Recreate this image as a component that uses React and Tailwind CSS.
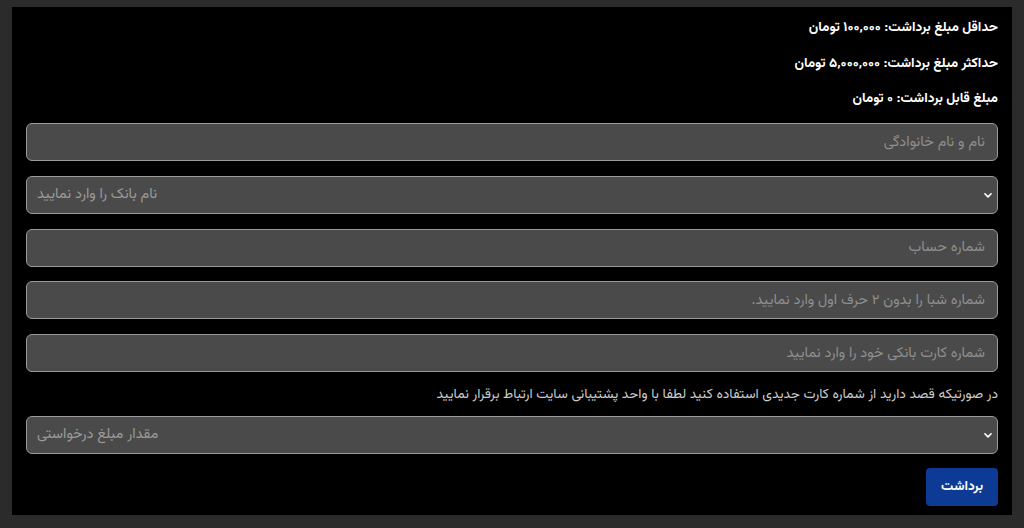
import React from "react";

const fieldBase =
  "w-full h-[38px] rounded-[6px] border border-[#9a9a9a] bg-[#4a4a4a] text-[14.5px] placeholder:text-[#8f8f8f] outline-none";

const Chevron = () => (
  <svg
    viewBox="0 0 16 16"
    className="pointer-events-none absolute right-[5px] top-1/2 h-[10px] w-[10px] -translate-y-1/2 text-white"
    fill="none"
    stroke="currentColor"
    strokeWidth="2.6"
    strokeLinecap="round"
    strokeLinejoin="round"
  >
    <path d="M3 6l5 5 5-5" />
  </svg>
);

const SelectField = ({ label }) => (
  <div className="relative" dir="ltr">
    <select
      defaultValue=""
      className={`${fieldBase} appearance-none pl-[10px] pr-8 text-left text-[#9a9a9a]`}
    >
      <option value="" disabled>
        {label}
      </option>
    </select>
    <Chevron />
  </div>
);

const TextField = ({ placeholder }) => (
  <input
    type="text"
    placeholder={placeholder}
    className={`${fieldBase} px-[12px] text-right text-[#e5e5e5]`}
  />
);

export default function App() {
  return (
    <div
      className="h-[528px] bg-[#2b2b2b] pt-[7px] pr-[12px] pb-[13px] pl-[12px]"
      style={{ fontFamily: '"Vazirmatn", "Noto Sans Arabic", "DejaVu Sans", sans-serif' }}
    >
      <div dir="rtl" className="flex h-full flex-col bg-black px-[14px] pt-[11px]">
        {/* Limits */}
        <div className="flex flex-col gap-[15.5px] text-[13.6px] font-bold leading-[20px] text-white">
          <p>حداقل مبلغ برداشت: ۱۰۰,۰۰۰ تومان</p>
          <p>حداکثر مبلغ برداشت: ۵,۰۰۰,۰۰۰ تومان</p>
          <p>مبلغ قابل برداشت: ۰ تومان</p>
        </div>

        {/* Form */}
        <div className="mt-[14px] flex flex-col gap-[14.75px]">
          <TextField placeholder="نام و نام خانوادگی" />
          <SelectField label="نام بانک را وارد نمایید" />
          <TextField placeholder="شماره حساب" />
          <TextField placeholder="شماره شبا را بدون ۲ حرف اول وارد نمایید." />
          <TextField placeholder="شماره کارت بانکی خود را وارد نمایید" />
        </div>

        <p className="mt-[13px] text-[13.7px] leading-[20px] text-[#cccccc]">
          در صورتیکه قصد دارید از شماره کارت جدیدی استفاده کنید لطفا با واحد پشتیبانی سایت ارتباط برقرار نمایید
        </p>

        <div className="mt-[11px]">
          <SelectField label="مقدار مبلغ درخواستی" />
        </div>

        <div className="mt-[14px] flex">
          <button className="h-[38px] w-[72px] rounded-[4px] bg-[#0c3a94] text-[13.5px] font-bold text-white">
            برداشت
          </button>
        </div>
      </div>
    </div>
  );
}
